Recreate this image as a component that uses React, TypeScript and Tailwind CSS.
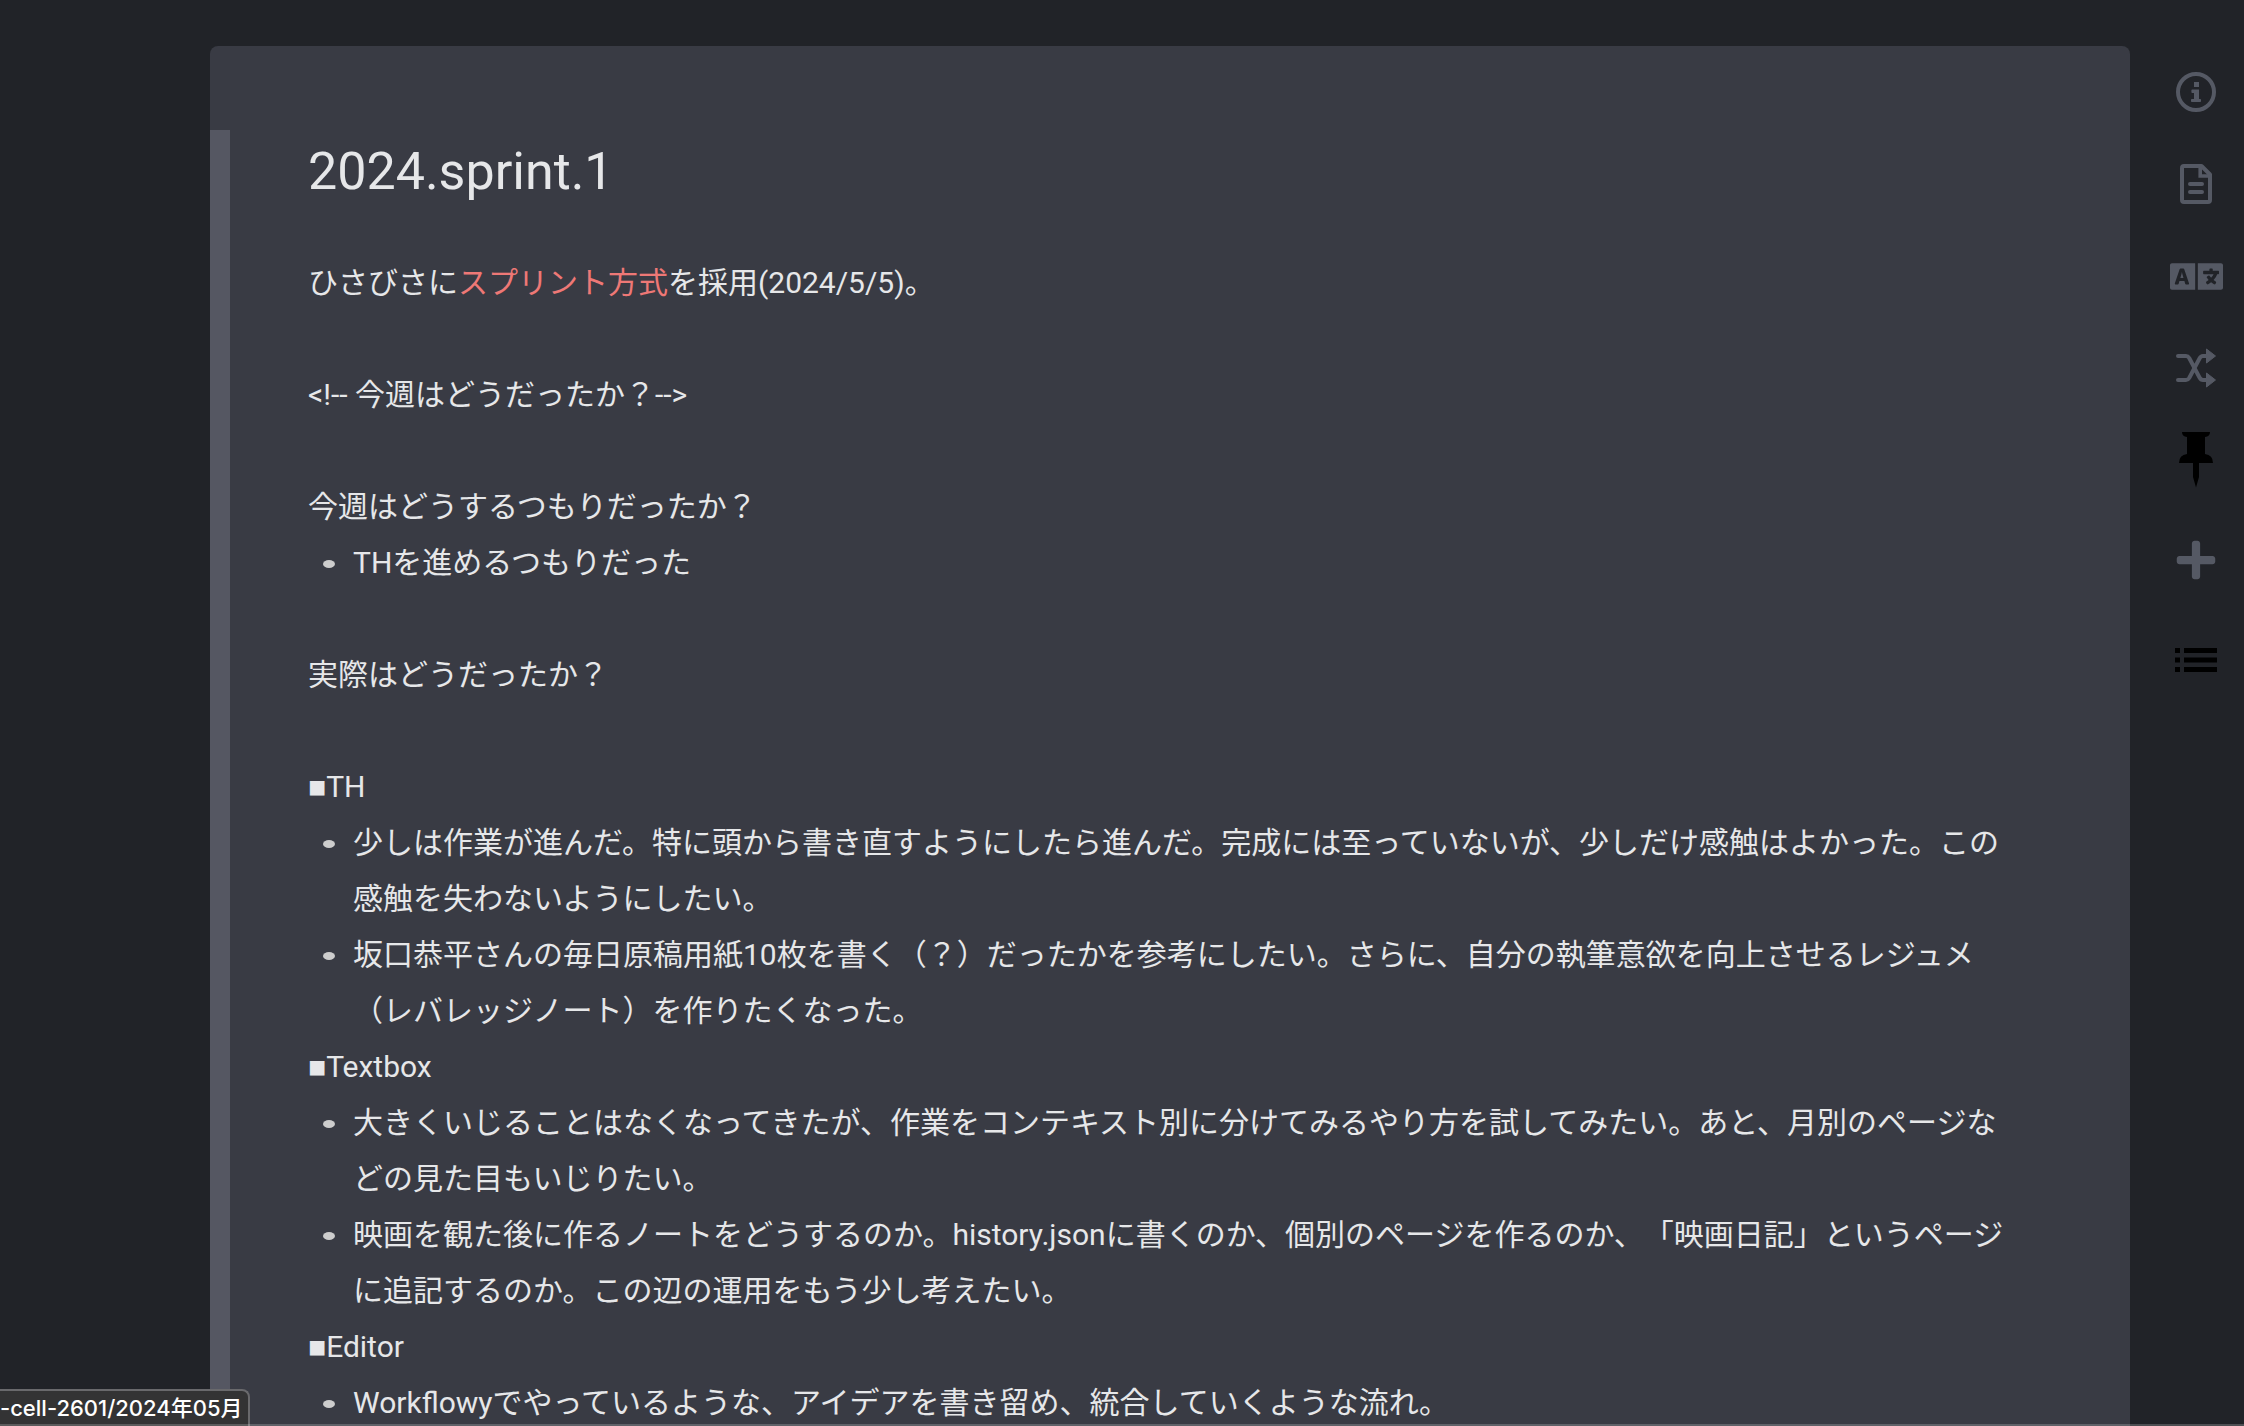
import type { ReactNode } from "react";
import { FaLanguage, FaPlus } from "react-icons/fa";

type Block =
  | { kind: "text"; text: ReactNode }
  | { kind: "heading"; text: string }
  | { kind: "list"; items: string[] }
  | { kind: "blank" };

const BLOCKS: Block[] = [
  { kind: "blank" },
  {
    kind: "text",
    text: (
      <>
        ひさびさに
        <a href="#sprint" className="text-[#ee7876] hover:underline">
          スプリント方式
        </a>
        を採用(2024/5/5)。
      </>
    ),
  },
  { kind: "blank" },
  { kind: "text", text: "<!-- 今週はどうだったか？-->" },
  { kind: "blank" },
  { kind: "text", text: "今週はどうするつもりだったか？" },
  { kind: "list", items: ["THを進めるつもりだった"] },
  { kind: "blank" },
  { kind: "text", text: "実際はどうだったか？" },
  { kind: "blank" },
  { kind: "heading", text: "TH" },
  {
    kind: "list",
    items: [
      "少しは作業が進んだ。特に頭から書き直すようにしたら進んだ。完成には至っていないが、少しだけ感触はよかった。この感触を失わないようにしたい。",
      "坂口恭平さんの毎日原稿用紙10枚を書く（？）だったかを参考にしたい。さらに、自分の執筆意欲を向上させるレジュメ（レバレッジノート）を作りたくなった。",
    ],
  },
  { kind: "heading", text: "Textbox" },
  {
    kind: "list",
    items: [
      "大きくいじることはなくなってきたが、作業をコンテキスト別に分けてみるやり方を試してみたい。あと、月別のページなどの見た目もいじりたい。",
      "映画を観た後に作るノートをどうするのか。history.jsonに書くのか、個別のページを作るのか、「映画日記」というページに追記するのか。この辺の運用をもう少し考えたい。",
    ],
  },
  { kind: "heading", text: "Editor" },
  {
    kind: "list",
    items: ["Workflowyでやっているような、アイデアを書き留め、統合していくような流れ。"],
  },
];

function InfoIcon() {
  return (
    <svg width="40" height="40" viewBox="0 0 40 40" fill="currentColor">
      <circle cx="20" cy="20" r="18" fill="none" stroke="currentColor" strokeWidth="4" />
      <path d="M18 10h5v5h-5zM16 17.6h7V27h1.2q.8 0 .8.8v1.4q0 .8-.8.8h-8.400q-.8 0-.8-.8v-1.4q0-.8.8-.8H18v-6h-1.800q-.8 0-.8-.8v-1.800q0-.8.8-.8z" />
    </svg>
  );
}

function FileIcon() {
  return (
    <svg width="32" height="40" viewBox="0 0 32 40" fill="none" stroke="currentColor" strokeWidth="4">
      <path d="M4 2h17.500L30 10.500V36q0 2-2 2H4q-2 0-2-2V4q0-2 2-2z" strokeLinejoin="round" />
      <path d="M20.200 2v10H30" strokeWidth="3.600" />
      <path d="M10 20h12M10 28h12" strokeLinecap="round" />
    </svg>
  );
}

function ShuffleIcon() {
  return (
    <svg width="40" height="40" viewBox="0 0 40 40" fill="none" stroke="currentColor" strokeWidth="4" strokeLinejoin="round">
      <path d="M2 8h8q2 0 3.200 2L23.500 29.500q1.300 2.500 3.500 2.500h5M2 32h8q2 0 3.200-2L23.500 10.500Q24.800 8 27 8h5" strokeLinecap="round" />
      <path d="M30.500 1 39.500 8l-9 7zM30.500 25l9 7-9 7z" fill="currentColor" strokeWidth="1" />
    </svg>
  );
}

function PinIcon() {
  return (
    <svg width="34" height="56" viewBox="0 0 34 56" fill="currentColor">
      <path d="M3 0h28q0 4.500-5 5v17q8 1 8 9H20v14l-3 10.500L14 45V31H0q0-8 8-9V5Q3 4.500 3 0z" />
    </svg>
  );
}

function ListIcon() {
  return (
    <svg width="42" height="24" viewBox="0 0 42 24" fill="currentColor">
      <path d="M0 0h5v5H0zM9 0h33v5H9zM0 9.500h5v5H0zM9 9.500h33v5H9zM0 19h5v5H0zM9 19h33v5H9z" />
    </svg>
  );
}

function ToolButton({ label, className = "", children }: { label: string; className?: string; children: ReactNode }) {
  return (
    <button type="button" aria-label={label} className={`h-23 w-full flex items-center justify-center cursor-pointer ${className}`}>
      {children}
    </button>
  );
}

function PageBlock({ block }: { block: Block }) {
  switch (block.kind) {
    case "blank":
      return <div className="h-14" />;
    case "text":
      return <p>{block.text}</p>;
    case "heading":
      return (
        <p>
          <span className="font-['Liberation_Sans',sans-serif]">■</span>
          {block.text}
        </p>
      );
    case "list":
      return (
        <ul>
          {block.items.map((item) => (
            <li key={item} className="flex">
              <span className="w-3 h-2 mt-[25px] ml-[15px] mr-[18px] shrink-0 rounded-[50%] bg-[#cdcdcd]" />
              <span className="min-w-0">{item}</span>
            </li>
          ))}
        </ul>
      );
  }
}

export default function App() {
  return (
    <div className="relative h-screen overflow-hidden flex bg-[#212328] pt-[46px] pl-[210px] text-[#e6e7e9] font-['Roboto','Noto_Sans_CJK_JP',sans-serif]">
      <main className="flex-1 min-w-0 flex rounded-t-lg bg-[#393b44]">
        <div className="w-5 mt-[84px] shrink-0 bg-[#555762]" />
        <article lang="ja" className="flex-1 min-w-0 pt-[99px] pl-[78px] pr-[104px] text-[30px] leading-14 [text-spacing-trim:space-all]">
          <h1 className="text-[52px] leading-[54px]">2024.sprint.1</h1>
          {BLOCKS.map((block, i) => (
            <PageBlock key={i} block={block} />
          ))}
        </article>
      </main>

      <nav className="w-24 ml-[18px] shrink-0 text-[#555964]">
        <ToolButton label="Page info">
          <InfoIcon />
        </ToolButton>
        <ToolButton label="Page menu">
          <FileIcon />
        </ToolButton>
        <ToolButton label="Translate">
          <FaLanguage size={53} />
        </ToolButton>
        <ToolButton label="Random page">
          <ShuffleIcon />
        </ToolButton>
        <ToolButton label="Pin" className="text-black">
          <PinIcon />
        </ToolButton>
        <ToolButton label="New page" className="mt-2">
          <FaPlus size={44} />
        </ToolButton>
        <ToolButton label="List" className="mt-2 text-black">
          <ListIcon />
        </ToolButton>
      </nav>

      {/* link target bubble */}
      <div className="absolute left-0 bottom-0 h-[37px] flex items-center whitespace-nowrap rounded-tr-lg border-t-2 border-r-2 border-[#69696c] bg-[#333334] pr-1.5 text-[22px] font-medium text-white font-['Inter','Noto_Sans_CJK_JP',sans-serif]">
        <span>-cell-2601/2024年05月</span>
      </div>
      <div className="absolute inset-x-0 bottom-0 h-0.5 bg-white/20" />
    </div>
  );
}
